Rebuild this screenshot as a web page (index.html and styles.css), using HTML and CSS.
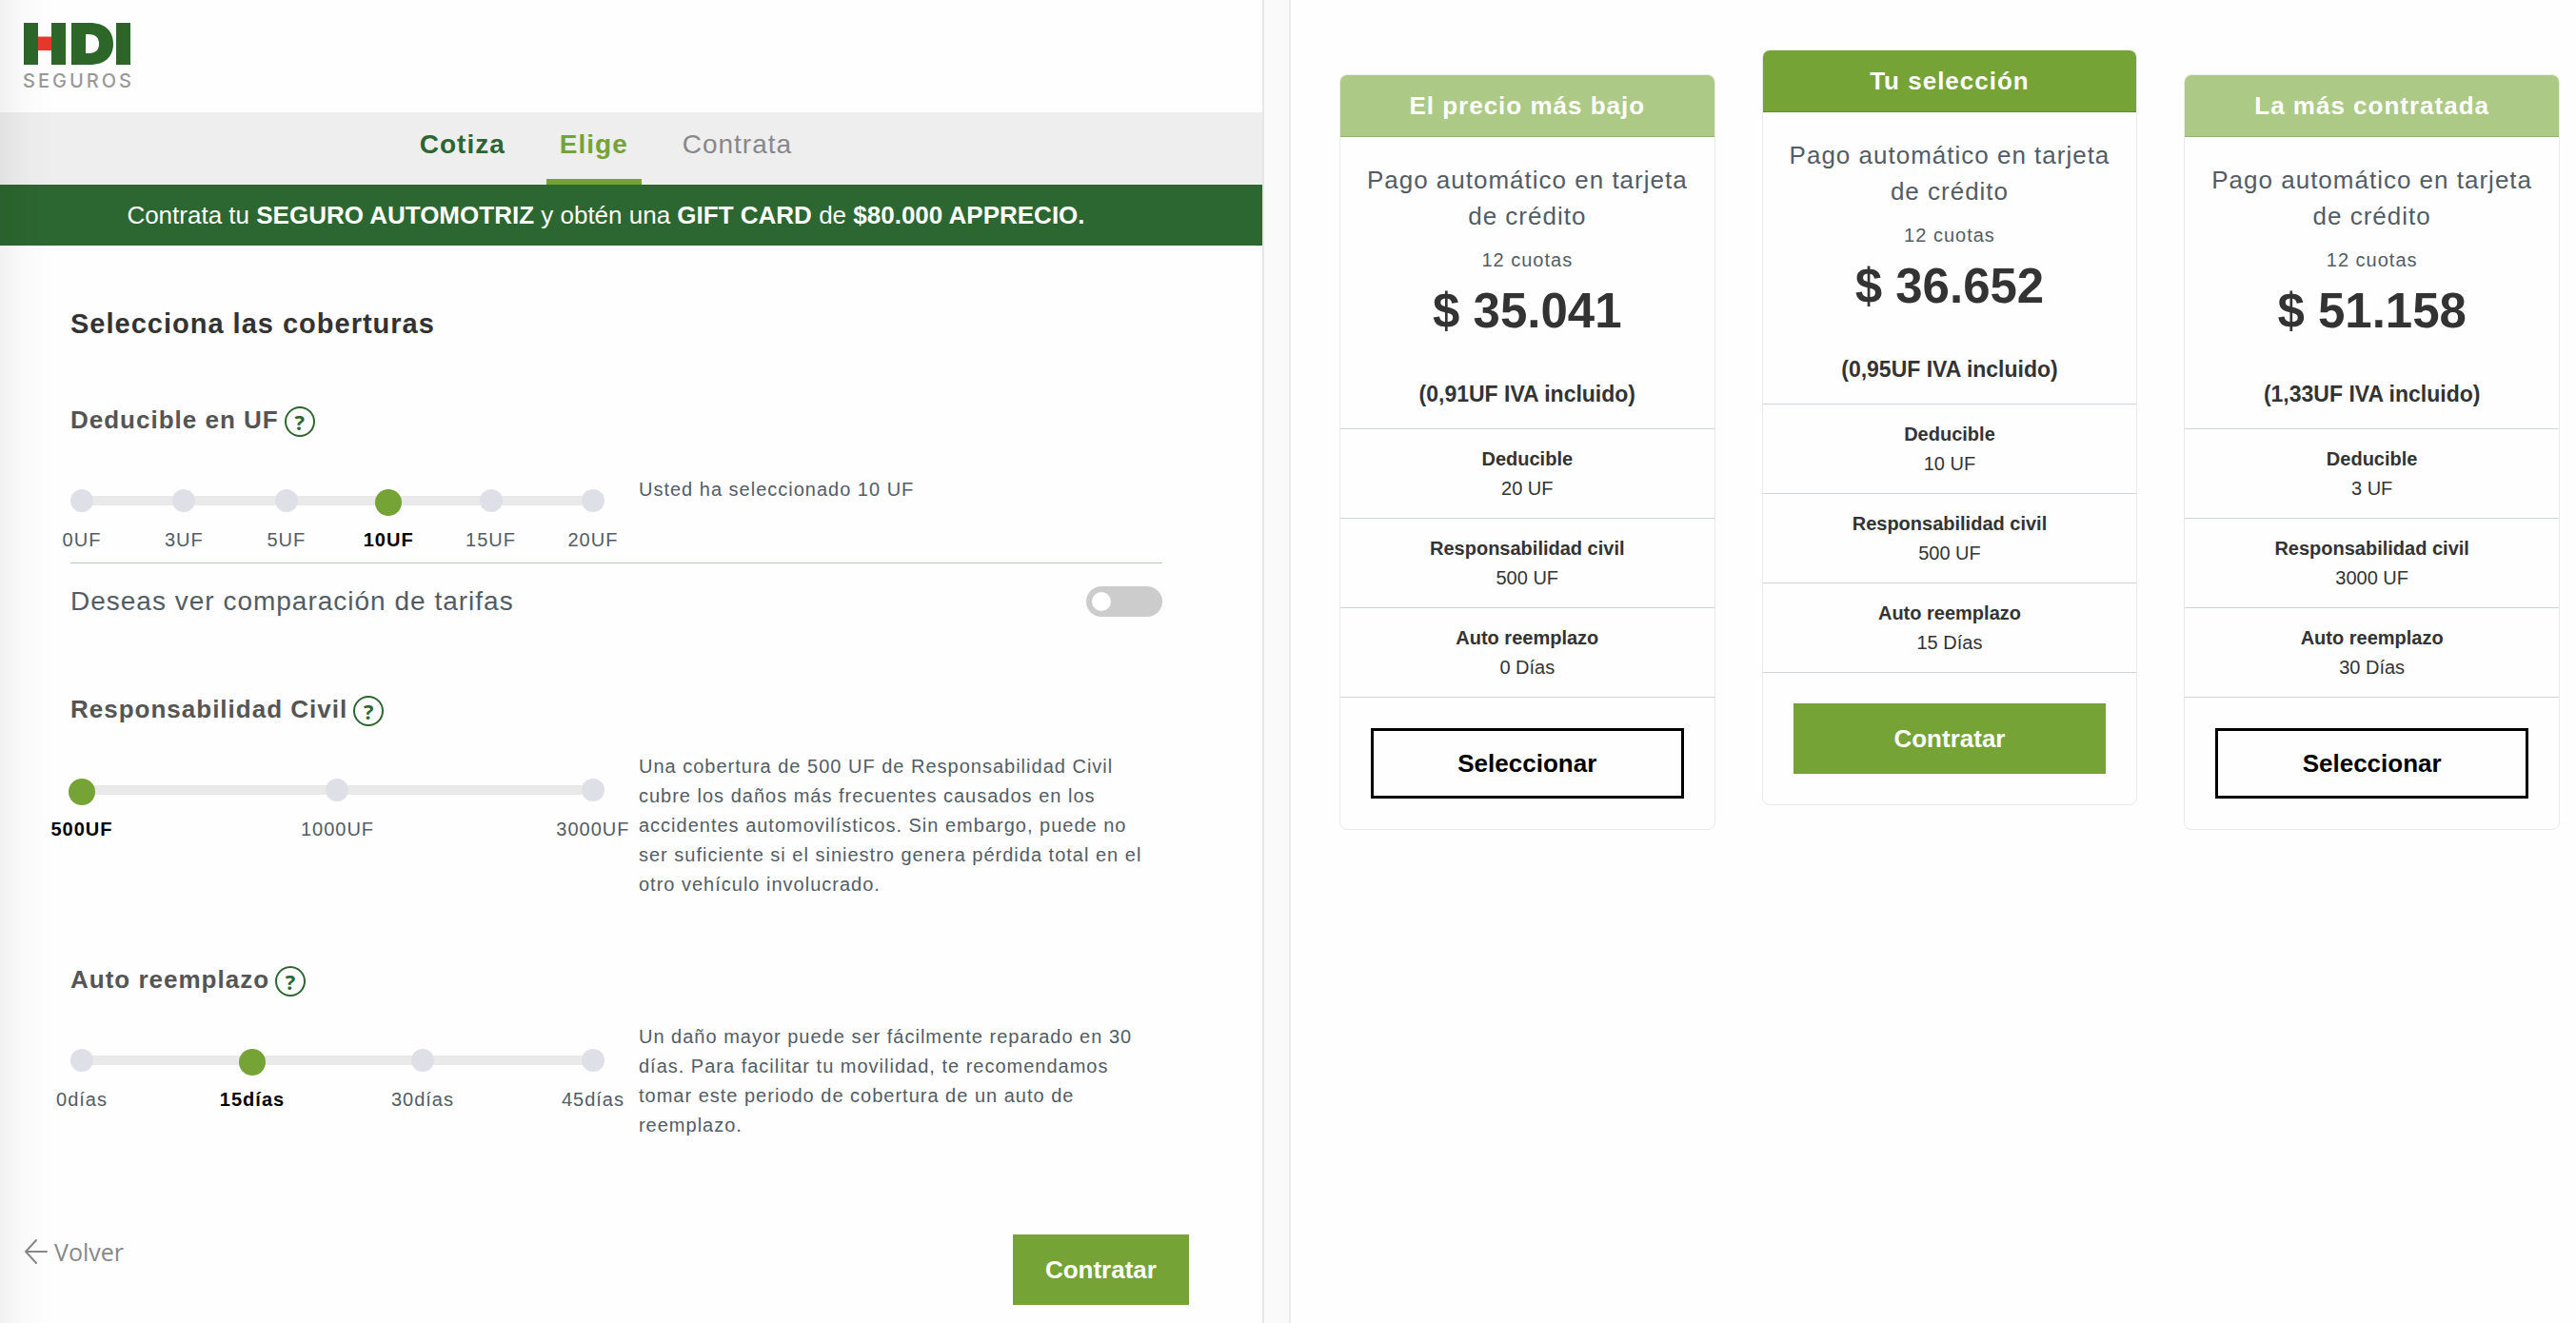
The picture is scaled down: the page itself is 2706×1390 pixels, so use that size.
FILE: index.html
```html
<!DOCTYPE html>
<html lang="es">
<head>
<meta charset="utf-8">
<meta name="viewport" content="width=device-width, initial-scale=1">
<title>HDI Seguros - Elige tu cobertura</title>
<link rel="stylesheet" href="styles.css">
</head>
<body>
<div class="page">
  <main class="quote">
    <header class="brand">
      <svg class="logo" viewBox="0 0 112 70" role="img" aria-label="HDI Seguros">
        <path fill="#2c6629" d="M0 0h15v44H0zM29 0h15v44H29zM97 0h15v44H97z"/>
        <path fill="#e8372b" d="M15 14.500h14v14.500H15z"/>
        <path fill="#2c6629" fill-rule="evenodd" d="M50 0h19c17 0 25 9 25 22s-8 22-25 22H50zM65 12v20h3c8 0 11-4 11-10s-3-10-11-10z"/>
        <text class="logo-name" x="-1" y="68">SEGUROS</text>
      </svg>
    </header>
    <nav class="steps" aria-label="Pasos">
      <a class="step step-done" href="#cotiza">Cotiza</a>
      <a class="step step-current" href="#elige" aria-current="step">Elige</a>
      <a class="step" href="#contrata">Contrata</a>
    </nav>
    <p class="promo">Contrata tu <strong>SEGURO AUTOMOTRIZ</strong> y obtén una <strong>GIFT CARD</strong> de <strong>$80.000 APPRECIO.</strong></p>

    <form class="coverages">
      <h1 class="title">Selecciona las coberturas</h1>

      <section class="coverage">
        <div class="coverage-head">
          <h2 class="coverage-title" id="t-deducible">Deducible en UF</h2>
          <button class="help" type="button" aria-label="Ayuda sobre deducible">?</button>
        </div>
        <div class="coverage-body">
          <div class="scale" role="radiogroup" aria-labelledby="t-deducible">
            <label class="stop"><input type="radio" name="deducible"><span>0UF</span></label>
            <label class="stop"><input type="radio" name="deducible"><span>3UF</span></label>
            <label class="stop"><input type="radio" name="deducible"><span>5UF</span></label>
            <label class="stop"><input type="radio" name="deducible" checked><span>10UF</span></label>
            <label class="stop"><input type="radio" name="deducible"><span>15UF</span></label>
            <label class="stop"><input type="radio" name="deducible"><span>20UF</span></label>
          </div>
          <p class="note note-short">Usted ha seleccionado 10 UF</p>
        </div>
        <div class="compare">
          <label for="comparar">Deseas ver comparación de tarifas</label>
          <input class="toggle" type="checkbox" role="switch" id="comparar">
        </div>
      </section>

      <section class="coverage">
        <div class="coverage-head">
          <h2 class="coverage-title" id="t-civil">Responsabilidad Civil</h2>
          <button class="help" type="button" aria-label="Ayuda sobre responsabilidad civil">?</button>
        </div>
        <div class="coverage-body">
          <div class="scale" role="radiogroup" aria-labelledby="t-civil">
            <label class="stop"><input type="radio" name="civil" checked><span>500UF</span></label>
            <label class="stop"><input type="radio" name="civil"><span>1000UF</span></label>
            <label class="stop"><input type="radio" name="civil"><span>3000UF</span></label>
          </div>
          <p class="note">Una cobertura de 500 UF de Responsabilidad Civil cubre los daños más frecuentes causados en los accidentes automovilísticos. Sin embargo, puede no ser suficiente si el siniestro genera pérdida total en el otro vehículo involucrado.</p>
        </div>
      </section>

      <section class="coverage">
        <div class="coverage-head">
          <h2 class="coverage-title" id="t-auto">Auto reemplazo</h2>
          <button class="help" type="button" aria-label="Ayuda sobre auto reemplazo">?</button>
        </div>
        <div class="coverage-body">
          <div class="scale" role="radiogroup" aria-labelledby="t-auto">
            <label class="stop"><input type="radio" name="auto"><span>0días</span></label>
            <label class="stop"><input type="radio" name="auto" checked><span>15días</span></label>
            <label class="stop"><input type="radio" name="auto"><span>30días</span></label>
            <label class="stop"><input type="radio" name="auto"><span>45días</span></label>
          </div>
          <p class="note">Un daño mayor puede ser fácilmente reparado en 30 días. Para facilitar tu movilidad, te recomendamos tomar este periodo de cobertura de un auto de reemplazo.</p>
        </div>
      </section>
    </form>

    <footer class="actions">
      <a class="back" href="#volver">
        <svg class="back-icon" viewBox="0 0 26 26" aria-hidden="true"><path d="M13 1 2 13l11 12M2 13h22"/></svg>
        Volver
      </a>
      <button class="button button-primary" type="button">Contratar</button>
    </footer>
  </main>

  <div class="divider"></div>

  <aside class="plans">
    <article class="plan">
      <h2 class="plan-name">El precio más bajo</h2>
      <div class="plan-price">
        <p class="plan-payment">Pago automático en tarjeta de crédito</p>
        <p class="plan-terms">12 cuotas</p>
        <p class="plan-amount">$ 35.041</p>
        <p class="plan-uf">(0,91UF IVA incluido)</p>
      </div>
      <dl class="plan-details">
        <div><dt>Deducible</dt><dd>20 UF</dd></div>
        <div><dt>Responsabilidad civil</dt><dd>500 UF</dd></div>
        <div><dt>Auto reemplazo</dt><dd>0 Días</dd></div>
      </dl>
      <button class="button button-outline" type="button">Seleccionar</button>
    </article>

    <article class="plan plan-selected">
      <h2 class="plan-name">Tu selección</h2>
      <div class="plan-price">
        <p class="plan-payment">Pago automático en tarjeta de crédito</p>
        <p class="plan-terms">12 cuotas</p>
        <p class="plan-amount">$ 36.652</p>
        <p class="plan-uf">(0,95UF IVA incluido)</p>
      </div>
      <dl class="plan-details">
        <div><dt>Deducible</dt><dd>10 UF</dd></div>
        <div><dt>Responsabilidad civil</dt><dd>500 UF</dd></div>
        <div><dt>Auto reemplazo</dt><dd>15 Días</dd></div>
      </dl>
      <button class="button button-primary" type="button">Contratar</button>
    </article>

    <article class="plan">
      <h2 class="plan-name">La más contratada</h2>
      <div class="plan-price">
        <p class="plan-payment">Pago automático en tarjeta de crédito</p>
        <p class="plan-terms">12 cuotas</p>
        <p class="plan-amount">$ 51.158</p>
        <p class="plan-uf">(1,33UF IVA incluido)</p>
      </div>
      <dl class="plan-details">
        <div><dt>Deducible</dt><dd>3 UF</dd></div>
        <div><dt>Responsabilidad civil</dt><dd>3000 UF</dd></div>
        <div><dt>Auto reemplazo</dt><dd>30 Días</dd></div>
      </dl>
      <button class="button button-outline" type="button">Seleccionar</button>
    </article>
  </aside>
</div>
</body>
</html>
```
FILE: styles.css
```css
:root {
  --green: #75a336;
  --green-light: #acc986;
  --green-dark: #2c6630;
  --ink: #333;
  --slate: #535c64;
}

* {
  box-sizing: border-box;
  margin: 0;
}

body {
  background: #fefefe;
  color: var(--ink);
  font-family: "Liberation Sans", Arial, sans-serif;
  font-size: 20px;
  line-height: 31px;
}

.page {
  display: grid;
  grid-template-columns: 49% 30px 1fr;
  min-height: 100vh;
}

/* soft shadow along the left edge, over every band of the panel */
.quote {
  position: relative;
}

.quote::after {
  content: "";
  position: absolute;
  inset: 0 auto 0 0;
  width: 60px;
  background: linear-gradient(to right, rgba(0, 0, 0, .05), rgba(0, 0, 0, .01) 50%, transparent);
  pointer-events: none;
}

.divider {
  background: #fafafa;
  border-left: 2px solid #e6e6e6;
  border-right: 2px solid #ebebeb;
}

.brand {
  height: 118px;
  padding: 24px 25px;
}

.logo {
  display: block;
  width: 112px;
  height: 70px;
  overflow: visible;
}

.logo-name {
  fill: #999;
  font-family: Inter, "Open Sans", sans-serif;
  font-size: 20px;
  font-weight: 500;
  letter-spacing: 3px;
}

.steps {
  display: flex;
  justify-content: center;
  gap: 29px;
  height: 76px;
  padding-right: 53px;
  background: #eee;
}

.step {
  padding: 14px 14px 0;
  border-bottom: 6px solid transparent;
  color: #888;
  font-size: 28px;
  line-height: 40px;
  letter-spacing: 1px;
  text-decoration: none;
}

.step-done {
  color: var(--green-dark);
  font-weight: bold;
}

.step-current {
  border-bottom-color: var(--green);
  color: var(--green);
  font-weight: bold;
}

.promo {
  padding: 16px 53px 16px 0;
  background: var(--green-dark);
  color: #fff;
  font-size: 26px;
  line-height: 32px;
  text-align: center;
}

.coverages {
  padding: 62px 105px 0 74px;
}

.title {
  margin-bottom: 67px;
  font-size: 29px;
  line-height: 40px;
  letter-spacing: 1px;
}

.coverage {
  margin-bottom: 70px;
}

.coverage:first-of-type {
  margin-bottom: 83px;
}

.coverage-head {
  display: flex;
  gap: 6px;
  margin-bottom: 27px;
}

.coverage-title {
  color: #555;
  font-size: 26px;
  line-height: 28px;
  letter-spacing: 1px;
}

.help {
  width: 32px;
  height: 32px;
  padding: 0;
  border: 2px solid var(--green-dark);
  border-radius: 50%;
  background: none;
  color: var(--green-dark);
  font: bold 22px/28px "Open Sans", sans-serif;
}

.coverage-body {
  display: grid;
  grid-template-columns: 51fr 50fr;
  gap: 36px;
  align-items: start;
}

.scale {
  display: flex;
  justify-content: space-between;
  padding-top: 28px;
  background: linear-gradient(#e9e9e9, #e9e9e9) 12px 35px / calc(100% - 24px) 10px no-repeat;
}

.stop {
  display: flex;
  flex-direction: column;
  align-items: center;
  gap: 14px;
  width: 24px;
  color: var(--slate);
  letter-spacing: 1px;
  white-space: nowrap;
}

.stop input {
  flex: none;
  appearance: none;
  width: 24px;
  height: 24px;
  margin: 0;
  border-radius: 50%;
  background: #dfe0e7;
}

.stop input:checked {
  width: 28px;
  height: 28px;
  margin-bottom: -4px;
  background: var(--green);
}

.stop input:checked + span {
  color: #000;
  font-weight: bold;
}

.note {
  padding-right: 12px;
  color: var(--slate);
  letter-spacing: 1px;
}

.note-short {
  padding-top: 13px;
}

.compare {
  display: flex;
  align-items: center;
  justify-content: space-between;
  margin-top: 8px;
  padding-top: 24px;
  border-top: 1px solid #aed0b0;
  color: var(--slate);
  font-size: 28px;
  line-height: 32px;
  letter-spacing: 1px;
}

.toggle {
  appearance: none;
  display: flex;
  align-items: center;
  width: 80px;
  height: 32px;
  margin: 0;
  padding: 0 6px;
  border-radius: 16px;
  background: #ccc;
}

.toggle::before {
  content: "";
  width: 20px;
  height: 20px;
  border-radius: 50%;
  background: #fff;
}

.toggle:checked {
  justify-content: flex-end;
  background: var(--green);
}

.actions {
  display: flex;
  align-items: flex-start;
  justify-content: space-between;
  padding: 29px 77px 16px 25px;
}

.back {
  display: flex;
  align-items: center;
  gap: 6px;
  color: #888;
  font-family: "Open Sans", sans-serif;
  font-size: 25px;
  line-height: 36px;
  text-decoration: none;
}

.back-icon {
  width: 26px;
  height: 26px;
  fill: none;
  stroke: #888;
  stroke-width: 2;
  stroke-linecap: round;
}

.button {
  height: 74px;
  padding: 0 34px;
  border: 0;
  border-radius: 0;
  font: bold 26px/32px "Liberation Sans", Arial, sans-serif;
}

.button-primary {
  background: var(--green);
  color: #fff;
}

.button-outline {
  border: 3px solid #000;
  background: none;
  color: #000;
}

.plans {
  display: grid;
  grid-template-columns: repeat(3, 1fr);
  align-items: start;
  gap: 49px;
  padding: 52px 17px 0 51px;
}

.plan {
  display: flex;
  flex-direction: column;
  margin-top: 26px;
  overflow: hidden;
  border: 1px solid #e9e9e9;
  border-radius: 8px;
  text-align: center;
}

.plan-selected {
  margin-top: 0;
}

.plan-name {
  padding: 16px;
  border-bottom: 1px solid rgba(0, 0, 0, .12);
  background: var(--green-light);
  color: #fff;
  font-size: 26px;
  line-height: 32px;
  letter-spacing: 1px;
}

.plan-selected .plan-name {
  background: var(--green);
}

.plan-price {
  padding: 26px 16px 20px;
}

.plan-payment {
  color: var(--slate);
  font-size: 26px;
  line-height: 38px;
  letter-spacing: 1px;
}

.plan-terms {
  margin-top: 12px;
  color: var(--slate);
  letter-spacing: 1px;
}

.plan-amount {
  font-size: 51px;
  font-weight: bold;
  line-height: 76px;
}

.plan-uf {
  margin-top: 34px;
  font-size: 23px;
  font-weight: bold;
}

.plan-details div {
  padding: 16px 0 15px;
  border-top: 1px solid #cfd3dc;
}

.plan-details div:last-child {
  border-bottom: 1px solid #cfd3dc;
}

.plan-details dt {
  font-weight: bold;
}

.plan-details dd {
  margin: 0;
}

.plan .button {
  margin: 32px;
}
```
